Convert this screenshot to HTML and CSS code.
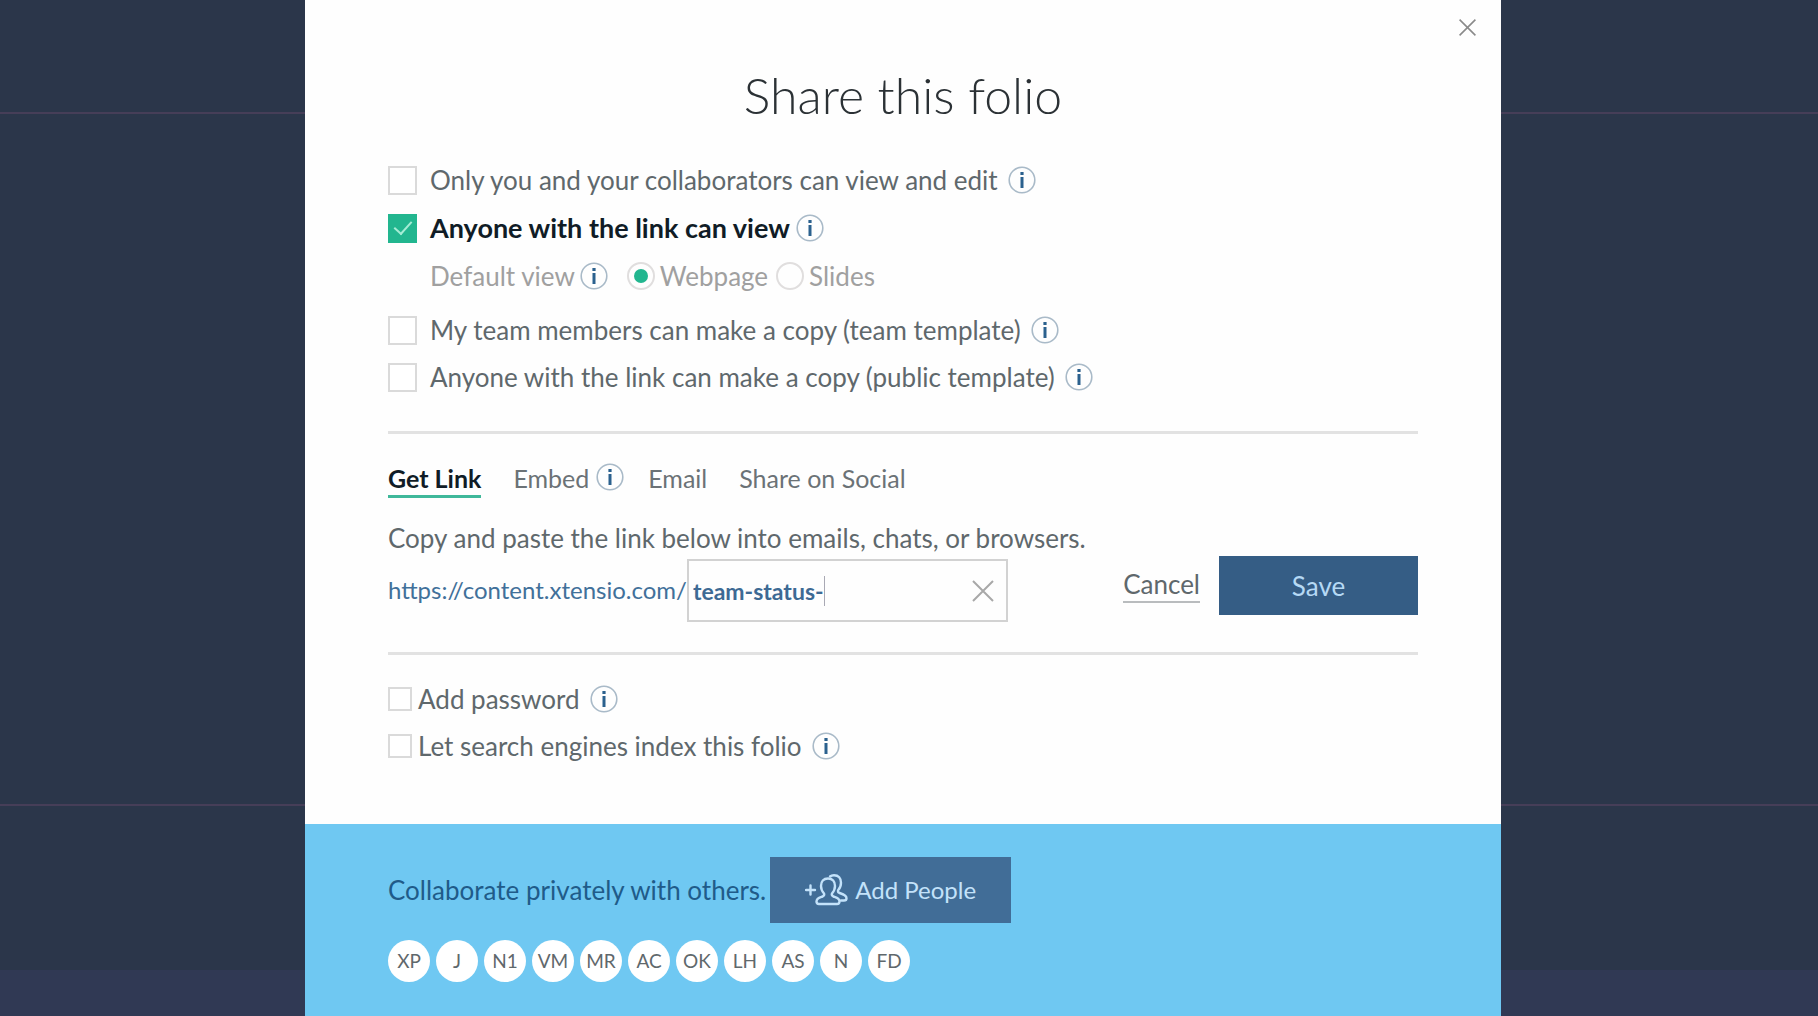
FILE: index.html
```html
<!DOCTYPE html>
<html lang="en">
<head>
<meta charset="utf-8">
<title>Share this folio</title>
<link rel="stylesheet" href="styles.css">
</head>
<body>
<svg class="sprite" aria-hidden="true">
  <symbol id="info" viewBox="0 0 28 28">
    <circle cx="14" cy="14" r="12.8" fill="none" stroke="#a9bac8" stroke-width="1.6"/>
    <rect x="12.4" y="6" width="3.2" height="3" fill="#2b618e"/>
    <rect x="12.5" y="11" width="3" height="11" fill="#2b618e"/>
  </symbol>
  <symbol id="cross" viewBox="0 0 24 24">
    <path d="M2 2 22 22M22 2 2 22" fill="none" stroke="currentColor" stroke-width="2"/>
  </symbol>
</svg>
<div class="page">
  <div class="gutter" aria-hidden="true">
    <div class="gutter-head"></div><div class="gutter-body"></div><div class="gutter-foot"></div><div class="gutter-bar"></div>
  </div>
  <main class="modal">
    <section class="settings">
      <button class="close" aria-label="Close"><svg><use href="#cross"/></svg></button>
      <h1>Share this folio</h1>

      <div class="group group-view">
        <div class="row">
          <label class="option"><input type="checkbox" class="box">Only you and your collaborators can view and edit</label>
          <button class="info" aria-label="About private access"><svg><use href="#info"/></svg></button>
        </div>
        <div class="row">
          <label class="option option-on"><input type="checkbox" class="box" checked>Anyone with the link can view</label>
          <button class="info" aria-label="About link access"><svg><use href="#info"/></svg></button>
        </div>
        <div class="row row-default">
          <span>Default view</span>
          <button class="info" aria-label="About the default view"><svg><use href="#info"/></svg></button>
          <div class="radios">
            <label class="radio"><input type="radio" name="view" checked>Webpage</label>
            <label class="radio"><input type="radio" name="view">Slides</label>
          </div>
        </div>
      </div>

      <div class="group group-copy">
        <div class="row">
          <label class="option"><input type="checkbox" class="box">My team members can make a copy (team template)</label>
          <button class="info" aria-label="About team templates"><svg><use href="#info"/></svg></button>
        </div>
        <div class="row">
          <label class="option"><input type="checkbox" class="box">Anyone with the link can make a copy (public template)</label>
          <button class="info" aria-label="About public templates"><svg><use href="#info"/></svg></button>
        </div>
      </div>

      <hr>

      <nav class="tabs">
        <a href="#link" class="tab tab-on">Get Link</a>
        <div class="tab-info">
          <a href="#embed" class="tab">Embed</a>
          <button class="info" aria-label="About embedding"><svg><use href="#info"/></svg></button>
        </div>
        <a href="#email" class="tab">Email</a>
        <a href="#social" class="tab">Share on Social</a>
      </nav>

      <p class="hint">Copy and paste the link below into emails, chats, or browsers.</p>
      <div class="link-row">
        <label class="prefix" for="slug">https://content.xtensio.com/</label>
        <div class="field">
          <input type="text" id="slug" value="team-status-">
          <span class="caret"></span>
          <button class="clear" aria-label="Clear"><svg><use href="#cross"/></svg></button>
        </div>
        <div class="actions">
          <a href="#cancel" class="cancel">Cancel</a>
          <button class="save">Save</button>
        </div>
      </div>

      <hr>

      <div class="group group-extra">
        <div class="row">
          <label class="option option-small"><input type="checkbox" class="box">Add password</label>
          <button class="info" aria-label="About passwords"><svg><use href="#info"/></svg></button>
        </div>
        <div class="row">
          <label class="option option-small"><input type="checkbox" class="box">Let search engines index this folio</label>
          <button class="info" aria-label="About search engines"><svg><use href="#info"/></svg></button>
        </div>
      </div>
    </section>

    <section class="people">
      <div class="invite">
        <p>Collaborate privately with others.</p>
        <button class="add">
          <svg viewBox="0 0 43 32" fill="none" stroke="currentColor" stroke-width="2.4" stroke-linejoin="round" stroke-linecap="round">
            <path d="M1 16h9M5.500 11.500v9"/>
            <path d="M23 4.500c-4.500 0-7 3-7 7.500 0 3 1.200 5.500 3 7.500.5 1.500 0 2.500-1.500 3-3 1-6 1.500-6 5 0 1.800 1 2.500 2.500 2.500h18c1.500 0 2.500-.7 2.500-2.500 0-3.500-3-4-6-5-1.500-.5-2-1.500-1.500-3 1.800-2 3-4.500 3-7.500 0-4.500-2.500-7.500-7-7.500z"/>
            <path d="M25 2.500c1-.9 2.200-1.300 4-1.300 4.500 0 7 3 7 7.500 0 3-1 5.500-2.800 7.300-.6 1.500 0 2.500 1.300 3 3 1 7 2 7 5.200 0 1.500-1 2.300-2.500 2.300h-3"/>
          </svg>
          Add People
        </button>
      </div>
      <ul class="avatars">
        <li>XP</li><li>J</li><li>N1</li><li>VM</li><li>MR</li><li>AC</li><li>OK</li><li>LH</li><li>AS</li><li>N</li><li>FD</li>
      </ul>
    </section>
  </main>
  <div class="gutter" aria-hidden="true">
    <div class="gutter-head"></div><div class="gutter-body"></div><div class="gutter-foot"></div><div class="gutter-bar"></div>
  </div>
</div>
</body>
</html>
```
FILE: styles.css
```css
* { box-sizing: border-box; }

body {
  margin: 0;
  background: #2b364a;
  color: #5f686c;
  font-family: Lato, "Liberation Sans", sans-serif;
  font-size: 26px;
  line-height: 30px;
}

h1, p, ul { margin: 0; padding: 0; }

button {
  padding: 0;
  border: 0;
  background: none;
  color: inherit;
  font: inherit;
  cursor: pointer;
}

svg { display: block; }
.sprite { display: none; }

.page {
  display: grid;
  grid-template-columns: 305fr 1196fr 317fr;
  min-height: 100vh;
}

/* canvas seen at both sides of the modal */
.gutter { display: flex; flex-direction: column; }
.gutter-head { height: 114px; border-bottom: 2px solid #463e58; }
.gutter-body { height: 692px; border-bottom: 2px solid #463e58; }
.gutter-foot { flex: 1; }
.gutter-bar { height: 46px; background: #303954; }

.modal { display: flex; flex-direction: column; background: #fefefe; }

.settings {
  position: relative;
  padding: 65px 83px 63px;
}

.close { position: absolute; top: 18px; right: 24px; color: #8a8a8a; }
.close svg { width: 19px; height: 19px; }

h1 {
  color: #2b3135;
  font-size: 50px;
  font-weight: 300;
  line-height: 60px;
  text-align: center;
}

.group { display: flex; flex-direction: column; }
.group-view { gap: 18px; margin-top: 40px; }
.group-copy { gap: 17px; margin-top: 24px; }
.group-extra { gap: 17px; margin-top: 29px; }

.row { display: flex; align-items: center; gap: 10px; height: 30px; }
.info svg { width: 28px; height: 28px; }

.option { display: flex; align-items: center; gap: 13px; }
.option-on { margin-right: -4px; color: #101c26; font-size: 27px; font-weight: 700; }
.option-small { gap: 6px; }

.box {
  appearance: none;
  display: grid;
  place-items: center;
  width: 29px;
  height: 29px;
  margin: 0;
  border: 2px solid #dadada;
  background: #fff;
}
.box:checked { border-color: #22b68f; background: #22b68f; }
.box:checked::after {
  content: "";
  width: 8px;
  height: 15px;
  margin-bottom: 5px;
  border: solid #a5ecd5;
  border-width: 0 2px 2px 0;
  transform: rotate(42deg);
}
.option-small .box { width: 24px; height: 24px; }

.row-default { gap: 5px; padding-left: 42px; color: #a0a0a0; }
.radios { display: flex; gap: 8px; margin-left: 14px; }
.radio { display: flex; align-items: center; gap: 5px; }
.radio input {
  appearance: none;
  display: grid;
  place-items: center;
  width: 28px;
  height: 28px;
  margin: 0;
  border: 2px solid #e0dede;
  border-radius: 50%;
}
.radio input:checked::after {
  content: "";
  width: 14px;
  height: 14px;
  border-radius: 50%;
  background: #22b68f;
}

hr { height: 3px; margin: 39px 0 0; border: 0; background: #e2e2e2; }

.tabs { display: flex; gap: 32px; margin-top: 29px; font-size: 25px; }
.tab { height: 35px; color: #6b7276; text-decoration: none; }
.tab-on { border-bottom: 3px solid #3fb89a; color: #101c26; font-weight: 700; }
.tab-info { display: flex; gap: 7px; margin-right: -8px; }
.tab-info .info { height: 28px; }

.hint { margin-top: 25px; }

.link-row { display: flex; align-items: flex-start; margin-top: 3px; }
.link-row + hr { margin-top: 30px; }
.prefix { margin-top: 19px; color: #41709a; font-size: 24px; white-space: nowrap; }
.field {
  display: flex;
  align-items: center;
  width: 321px;
  height: 63px;
  margin-top: 3px;
  padding: 0 11px 0 4px;
  border: 2px solid #d2d2d2;
}
.field input {
  field-sizing: content;
  padding: 0;
  border: 0;
  outline: 0;
  background: none;
  color: #3d6a94;
  font: inherit;
  font-size: 23px;
  font-weight: 700;
}
.caret { width: 1px; height: 30px; background: #a9a9b4; }
.clear { margin-left: auto; color: #a8a8a8; }
.clear svg { width: 24px; height: 24px; }

.actions { display: flex; align-items: center; gap: 19px; margin-left: auto; }
.cancel {
  height: 34px;
  border-bottom: 2px solid #b9bcbe;
  color: #5f686c;
  text-decoration: none;
}
.save { width: 199px; height: 59px; background: #355d85; color: #b5d9f5; }

.people { flex: 1; padding: 33px 83px 32px; background: #6fc8f2; }
.invite { display: flex; align-items: center; gap: 4px; color: #205b89; }
.add {
  display: flex;
  align-items: center;
  justify-content: center;
  gap: 7px;
  width: 241px;
  height: 66px;
  background: #416d97;
  color: #c3e2fa;
  font-size: 24px;
}
.add svg { width: 43px; height: 32px; }

.avatars { display: flex; gap: 6px; margin-top: 17px; list-style: none; }
.avatars li {
  width: 42px;
  height: 42px;
  border-radius: 50%;
  background: #fff;
  font-size: 19px;
  line-height: 42px;
  text-align: center;
}
```
